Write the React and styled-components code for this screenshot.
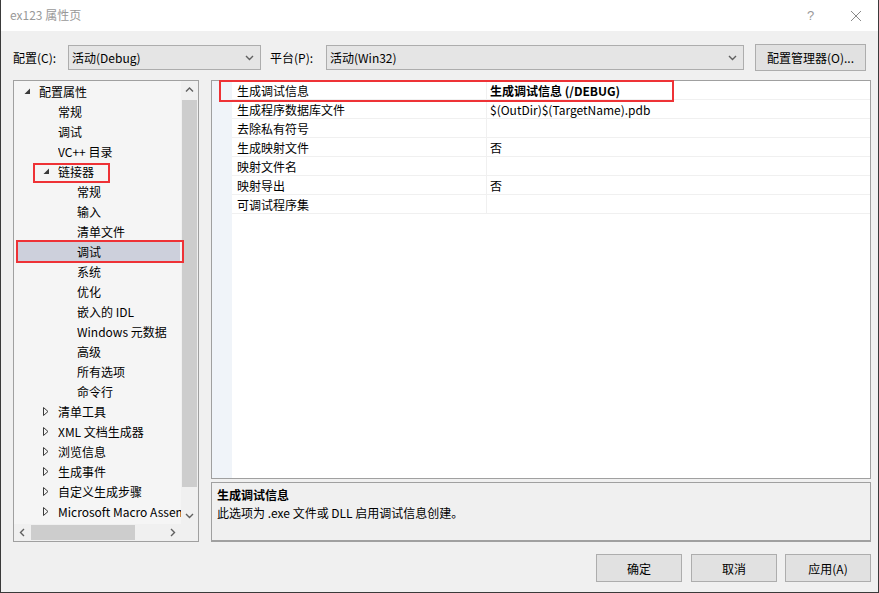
import React from 'react'
import styled, { createGlobalStyle } from 'styled-components'

const GlobalStyle = createGlobalStyle`
  html, body { margin: 0; padding: 0; background: #ffffff; }
  body {
    font-family: "Microsoft YaHei", "Noto Sans CJK SC", "Noto Sans", sans-serif;
    font-size: 12px;
    color: #000;
  }
  * { box-sizing: border-box; }
`

const RED = '#ee3236'

// window frame
const Window = styled.div`
  width: 879px;
  height: 593px;
  display: flex;
  flex-direction: column;
  border-left: 1px solid #3a3a3a;
  border-right: 1px solid #3a3a3a;
  border-bottom: 1px solid #3a3a3a;
  background: #f0f0f0;
  overflow: hidden;
`

const TitleBar = styled.div`
  height: 31px;
  flex: none;
  display: flex;
  align-items: center;
  background: #fff;
  padding-left: 9px;
  color: #999;
`

const TitleText = styled.div`
  flex: 1;
  line-height: 1;
  margin-top: -1px;
`

const TitleButton = styled.div`
  width: 45px;
  height: 31px;
  display: flex;
  align-items: center;
  justify-content: center;
  color: #999;
  font-size: 13px;
  font-family: "Liberation Sans", sans-serif;
`

const Body = styled.div`
  flex: 1;
  display: flex;
  flex-direction: column;
  padding: 13px 7px 0 12px;
`

const Toolbar = styled.div`
  height: 27px;
  display: flex;
  align-items: center;
`

const Label = styled.span`
  width: ${p => p.w}px;
  flex: none;
  white-space: nowrap;
`

const Combo = styled.div`
  width: ${p => p.w}px;
  height: 25px;
  flex: none;
  margin-right: ${p => p.mr || 0}px;
  border: 1px solid #adadad;
  background: #e5e5e5;
  display: flex;
  align-items: center;
  padding: 0 6px 0 3px;
  & > span { flex: 1; }
`

const Button = styled.div`
  width: ${p => p.w || 86}px;
  height: ${p => p.h || 28}px;
  flex: none;
  border: 1px solid #adadad;
  background: #e1e1e1;
  display: flex;
  align-items: center;
  justify-content: center;
  margin-left: ${p => p.ml || 0}px;
`

const Main = styled.div`
  margin-top: 9px;
  display: flex;
  height: 462px;
`

// left tree
const TreePanel = styled.div`
  width: 186px;
  flex: none;
  height: 462px;
  border: 1px solid #a0a0a0;
  background: #f5f5f5;
  display: flex;
  flex-direction: column;
`

const TreeTop = styled.div`
  flex: 1;
  display: flex;
  min-width: 0;
`

const TreeList = styled.div`
  flex: 1;
  min-width: 0;
  position: relative;
  z-index: 1;
`

const TreeRow = styled.div`
  height: 20px;
  display: flex;
  align-items: center;
  position: relative;
  white-space: nowrap;
  min-width: 0;
  background: ${p => (p.selected ? '#cdd0dc' : 'transparent')};
  margin: ${p => (p.selected ? '0 1px 0 3px' : '0')};
  padding-left: ${p => (p.selected ? 10 + p.level * 19 - 3 : 10 + p.level * 19)}px;
`

const Arrow = styled.span`
  width: 15px;
  display: inline-flex;
  align-items: center;
  flex: none;
`

const TreeText = styled.span`
  flex: 1;
  min-width: 0;
  overflow: hidden;
`

const Mark = styled.div`
  position: absolute;
  left: ${p => p.l}px;
  top: ${p => p.t}px;
  width: ${p => p.w}px;
  height: ${p => p.h}px;
  border: 2px solid ${RED};
  pointer-events: none;
  z-index: 3;
`

const VScroll = styled.div`
  width: 17px;
  flex: none;
  display: flex;
  flex-direction: column;
  align-items: center;
  background: #f0f0f0;
`

const ScrollArrow = styled.div`
  width: 17px;
  height: 17px;
  flex: none;
  display: flex;
  align-items: center;
  justify-content: center;
`

const VThumb = styled.div`
  width: 15px;
  height: 387px;
  margin-top: 2px;
  background: #cdcdcd;
`

const Track = styled.div`
  flex: 1;
`

const HScroll = styled.div`
  height: 17px;
  flex: none;
  display: flex;
  background: #f0f0f0;
`

const HThumb = styled.div`
  width: 104px;
  height: 15px;
  margin-top: 1px;
  background: #cdcdcd;
`

const Corner = styled.div`
  width: 17px;
  background: #f0f0f0;
`

// right side
const RightCol = styled.div`
  margin-left: 12px;
  flex: 1;
  display: flex;
  flex-direction: column;
`

const Grid = styled.div`
  height: 399px;
  border: 1px solid #a0a0a0;
  background: #fff;
  position: relative;
  display: flex;
`

const Gutter = styled.div`
  width: 20px;
  background: #f0f4f9;
`

const GridRows = styled.div`
  flex: 1;
`

const GridRow = styled.div`
  height: 19px;
  display: grid;
  grid-template-columns: 254px 1fr;
  border-bottom: 1px solid #f0f0f0;
`

const Cell = styled.div`
  display: flex;
  align-items: center;
  padding-left: ${p => (p.value ? 3 : 5)}px;
  border-left: ${p => (p.value ? '1px solid #f0f0f0' : 'none')};
  font-weight: ${p => (p.bold ? 700 : 400)};
  white-space: nowrap;
`

const Desc = styled.div`
  margin-top: 3px;
  height: 60px;
  border: 1px solid #a0a0a0;
  border-bottom-width: 2px;
  background: #f0f0f0;
  padding: 3px 5px;
  line-height: 18px;
`

const DescTitle = styled.div`
  font-weight: 700;
`

const Footer = styled.div`
  display: flex;
  justify-content: flex-end;
  margin-top: 12px;
`

const Chevron = ({ dir = 'down', color = '#606060', size = 9 }) => {
  const pts = {
    down: '1,3 4.5,6.5 8,3',
    up: '1,6.5 4.5,3 8,6.5',
    left: '6,1 2.5,4.5 6,8',
    right: '3,1 6.5,4.5 3,8',
  }[dir]
  return (
    <svg width={size} height={size} viewBox="0 0 9 9">
      <polyline points={pts} fill="none" stroke={color} strokeWidth="1.4" />
    </svg>
  )
}

const Expanded = () => (
  <svg width="7" height="7" viewBox="0 0 7 7">
    <polygon points="6,0.5 6,6 0.5,6" fill="#3a3a3a" />
  </svg>
)

const Collapsed = () => (
  <svg width="6" height="9" viewBox="0 0 6 9">
    <polygon points="0.5,0.5 5,4.5 0.5,8.5" fill="none" stroke="#3a3a3a" strokeWidth="1" />
  </svg>
)

const tree = [
  { t: '配置属性', level: 0, open: true },
  { t: '常规', level: 1 },
  { t: '调试', level: 1 },
  { t: 'VC++ 目录', level: 1 },
  { t: '链接器', level: 1, open: true, mark: true },
  { t: '常规', level: 2 },
  { t: '输入', level: 2 },
  { t: '清单文件', level: 2 },
  { t: '调试', level: 2, selected: true },
  { t: '系统', level: 2 },
  { t: '优化', level: 2 },
  { t: '嵌入的 IDL', level: 2 },
  { t: 'Windows 元数据', level: 2 },
  { t: '高级', level: 2 },
  { t: '所有选项', level: 2 },
  { t: '命令行', level: 2 },
  { t: '清单工具', level: 1, closed: true },
  { t: 'XML 文档生成器', level: 1, closed: true },
  { t: '浏览信息', level: 1, closed: true },
  { t: '生成事件', level: 1, closed: true },
  { t: '自定义生成步骤', level: 1, closed: true },
  { t: 'Microsoft Macro Assembler', level: 1, closed: true },
]

const props = [
  ['生成调试信息', '生成调试信息 (/DEBUG)', true],
  ['生成程序数据库文件', '$(OutDir)$(TargetName).pdb'],
  ['去除私有符号', ''],
  ['生成映射文件', '否'],
  ['映射文件名', ''],
  ['映射导出', '否'],
  ['可调试程序集', ''],
]

export default function App() {
  return (
    <>
      <GlobalStyle />
      <Window>
        <TitleBar>
          <TitleText>ex123 属性页</TitleText>
          <TitleButton>?</TitleButton>
          <TitleButton>
            <svg width="12" height="12" viewBox="0 0 12 12">
              <path d="M1 1 L11 11 M11 1 L1 11" stroke="#8a8a8a" strokeWidth="1" />
            </svg>
          </TitleButton>
        </TitleBar>
        <Body>
          <Toolbar>
            <Label w={55}>配置(C):</Label>
            <Combo w={193} mr={9}>
              <span>活动(Debug)</span>
              <Chevron />
            </Combo>
            <Label w={56}>平台(P):</Label>
            <Combo w={418}>
              <span>活动(Win32)</span>
              <Chevron />
            </Combo>
            <Button w={111} h={27} ml={11}>配置管理器(O)...</Button>
          </Toolbar>
          <Main>
            <TreePanel>
              <TreeTop>
                <TreeList>
                  {tree.map((r, i) => (
                    <TreeRow key={i} level={r.level} selected={r.selected}>
                      <Arrow>
                        {r.open && <Expanded />}
                        {r.closed && <Collapsed />}
                      </Arrow>
                      <TreeText>{r.t}</TreeText>
                      {r.mark && <Mark l={19} t={2} w={77} h={20} />}
                      {r.selected && <Mark l={-1} t={-1} w={168} h={23} />}
                    </TreeRow>
                  ))}
                </TreeList>
                <VScroll>
                  <ScrollArrow><Chevron dir="up" /></ScrollArrow>
                  <VThumb />
                  <Track />
                  <ScrollArrow><Chevron dir="down" /></ScrollArrow>
                </VScroll>
              </TreeTop>
              <HScroll>
                <ScrollArrow><Chevron dir="left" /></ScrollArrow>
                <HThumb />
                <Track />
                <ScrollArrow><Chevron dir="right" /></ScrollArrow>
                <Corner />
              </HScroll>
            </TreePanel>
            <RightCol>
              <Grid>
                <Gutter />
                <GridRows>
                  {props.map(([k, v, b], i) => (
                    <GridRow key={i}>
                      <Cell>{k}</Cell>
                      <Cell value bold={b}>{v}</Cell>
                    </GridRow>
                  ))}
                </GridRows>
                <Mark l={7} t={-1} w={455} h={22} />
              </Grid>
              <Desc>
                <DescTitle>生成调试信息</DescTitle>
                <div>此选项为 .exe 文件或 DLL 启用调试信息创建。</div>
              </Desc>
            </RightCol>
          </Main>
          <Footer>
            <Button>确定</Button>
            <Button ml={9}>取消</Button>
            <Button ml={8}>应用(A)</Button>
          </Footer>
        </Body>
      </Window>
    </>
  )
}
